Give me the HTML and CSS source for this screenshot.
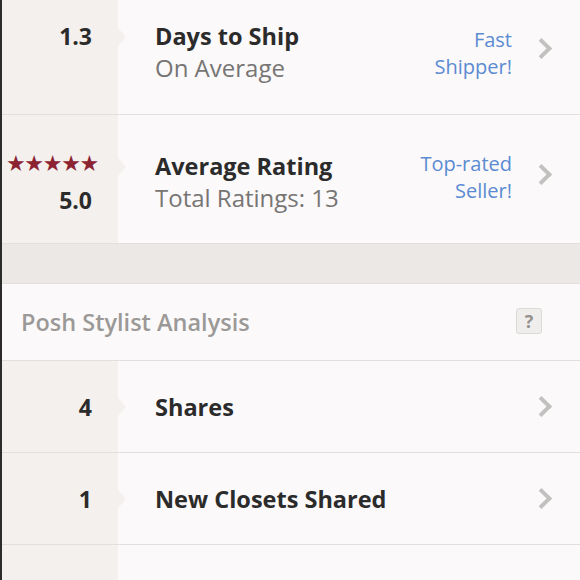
FILE: index.html
```html
<!DOCTYPE html>
<html lang="en">
<head>
    <meta charset="UTF-8">
    <meta name="viewport" content="width=device-width, initial-scale=1.0">
    <title>Seller Stats</title>
    <link rel="stylesheet" href="styles.css">
</head>
<body>
<div class="page">

    <!-- Seller stats -->
    <div class="row row-ship">
        <div class="num"><span class="value">1.3</span></div>
        <div class="info">
            <div class="text">
                <div class="title">Days to Ship</div>
                <div class="sub">On Average</div>
            </div>
            <div class="badge">Fast<br>Shipper!</div>
            <span class="chevron"></span>
        </div>
    </div>

    <div class="row row-rating">
        <div class="num">
            <div class="stars">&#9733;&#9733;&#9733;&#9733;&#9733;</div>
            <span class="value">5.0</span>
        </div>
        <div class="info">
            <div class="text">
                <div class="title">Average Rating</div>
                <div class="sub">Total Ratings: 13</div>
            </div>
            <div class="badge">Top-rated<br>Seller!</div>
            <span class="chevron"></span>
        </div>
    </div>

    <div class="band"></div>

    <!-- Posh Stylist Analysis -->
    <div class="section-head">
        <span>Posh Stylist Analysis</span>
        <span class="help">?</span>
    </div>

    <div class="row row-small">
        <div class="num"><span class="value">4</span></div>
        <div class="info">
            <div class="title">Shares</div>
            <span class="chevron"></span>
        </div>
    </div>

    <div class="row row-small">
        <div class="num"><span class="value">1</span></div>
        <div class="info">
            <div class="title">New Closets Shared</div>
            <span class="chevron"></span>
        </div>
    </div>

    <div class="row row-small">
        <div class="num"><span class="value">1</span></div>
        <div class="info">
            <div class="title">Parties Attended</div>
            <span class="chevron"></span>
        </div>
    </div>

</div>
</body>
</html>
```

FILE: styles.css
```css
* {
    margin: 0;
    padding: 0;
    box-sizing: border-box;
}

body {
    font-family: 'Open Sans', 'Lato', sans-serif;
    background-color: #fbf9f9;
    color: #2b2b2b;
    height: 580px;
    overflow: hidden;
}

.page {
    border-left: 2px solid #2c2b2b;
    min-height: 580px;
}

/* Stat rows */
.row {
    display: flex;
    border-bottom: 1px solid #e2dfdd;
}

.row-ship {
    height: 115px;
}

.row-rating {
    height: 129px;
}

.row-small {
    height: 92px;
}

.num {
    width: 116px;
    flex-shrink: 0;
    background-color: #f3f0ed;
    position: relative;
    display: flex;
    flex-direction: column;
    align-items: flex-end;
    justify-content: center;
    padding-right: 26px;
}

/* little arrow pointing into the row, level with the first text line */
.num::after {
    content: "";
    position: absolute;
    right: -8px;
    top: 50%;
    margin-top: -9px;
    border-left: 8px solid #f3f0ed;
    border-top: 9px solid transparent;
    border-bottom: 9px solid transparent;
}

.row-ship .num,
.row-rating .num {
    justify-content: flex-start;
}

.row-ship .num {
    padding-top: 20px;
}

.row-rating .num {
    padding-top: 37px;
}

.row-ship .num::after {
    top: 28px;
    margin-top: 0;
}

.row-rating .num::after {
    top: 43px;
    margin-top: 0;
}

.value {
    font-size: 23px;
    font-weight: 700;
    line-height: 32px;
}

.stars {
    color: #8c2333;
    font-family: 'DejaVu Sans', sans-serif;
    font-size: 22px;
    letter-spacing: -1.3px;
    line-height: 20px;
    margin-right: -6px;
    margin-bottom: 10px;
    padding-top: 2px;
}

.info {
    flex: 1;
    display: flex;
    align-items: center;
    padding-left: 37px;
    padding-right: 28px;
}

.text {
    flex: 1;
}

.row-small .title {
    flex: 1;
}

.title {
    font-size: 23.5px;
    font-weight: 700;
    line-height: 32px;
}

.sub {
    font-size: 24px;
    color: #777574;
    line-height: 32px;
}

.badge {
    color: #5b8bd3;
    font-size: 20px;
    line-height: 27px;
    text-align: right;
    margin-right: 22px;
}

.chevron {
    width: 15px;
    height: 15px;
    border-top: 4px solid #c3c1bf;
    border-right: 4px solid #c3c1bf;
    transform: rotate(45deg);
    margin-right: 3px;
}

.row-ship .info {
    align-items: flex-start;
    padding-top: 20px;
}

.row-ship .badge {
    margin-top: 6px;
}

.row-ship .chevron {
    margin-top: 21px;
}

.row-rating .info {
    align-items: flex-start;
    padding-top: 35px;
}

.row-rating .badge {
    margin-top: 0;
}

.row-rating .chevron {
    margin-top: 17px;
}

/* grey divider */
.band {
    height: 40px;
    background-color: #ebe8e5;
    border-bottom: 1px solid #e2dfdd;
}

.section-head {
    height: 77px;
    display: flex;
    align-items: center;
    justify-content: space-between;
    padding: 0 38px 0 19px;
    font-size: 23.5px;
    font-weight: 600;
    color: #9b9997;
    border-bottom: 1px solid #e2dfdd;
}

.help {
    width: 26px;
    height: 26px;
    margin-top: -3px;
    border: 1px solid #dcd9d6;
    border-radius: 3px;
    background-color: #f0eeec;
    color: #94928f;
    font-size: 18px;
    font-weight: 700;
    text-align: center;
    line-height: 24px;
}
```
